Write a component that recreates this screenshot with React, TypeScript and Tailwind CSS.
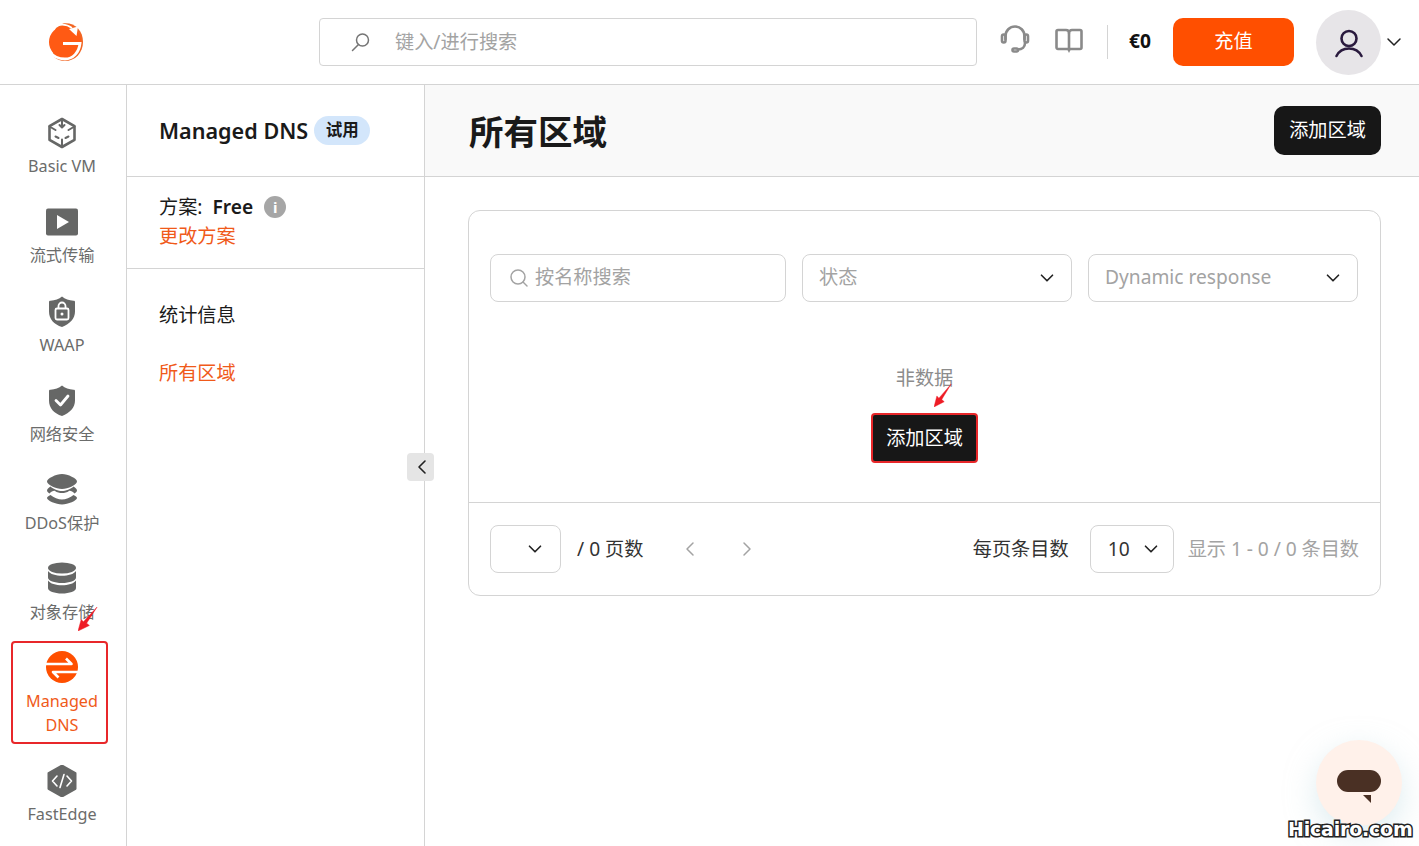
import React from "react";
import { ChevronDown, ChevronLeft, ChevronRight } from "lucide-react";

const C = "#666766";

const Cube = () => (
  <svg width="32" height="32" viewBox="0 0 32 32" fill="none" stroke={C} strokeWidth="2.6" strokeLinejoin="round" strokeLinecap="round">
    <path d="M16 2 28.500 9.200V22.800L16 30 3.500 22.800V9.200Z" />
    <path d="M16 3v7M13.500 8 16 10.500 18.500 8M3.500 9.500 9.500 13M28.500 9.500 22.500 13M16 29v-6.500M9.500 19.500 12.500 21M22.500 19.500 19.500 21" strokeWidth="2" />
  </svg>
);
const Play = () => (
  <svg width="32" height="32" viewBox="0 0 32 32">
    <rect x="0" y="2.500" width="32" height="27" rx="2" fill={C} />
    <path d="M11 9v14l12-7z" fill="#fff" />
  </svg>
);
const shield = "M16 1.500c3 2.600 7 4 11.500 4.200 1 0 1.500.5 1.500 1.300v9.500c0 7-5 12.500-13 15.500C8 29.500 3 24 3 16.500V7c0-.8.500-1.300 1.500-1.300C9 5.500 13 4.100 16 1.500Z";
const ShieldLock = () => (
  <svg width="32" height="32" viewBox="0 0 32 32">
    <path d={shield} fill={C} />
    <rect x="9.500" y="13.500" width="13" height="11" rx="1.500" fill="none" stroke="#fff" strokeWidth="1.800" />
    <path d="M12.500 13.500v-2.500a3.500 3.500 0 0 1 7 0v2.500" fill="none" stroke="#fff" strokeWidth="1.800" />
    <circle cx="16" cy="19" r="1.500" fill="#fff" />
  </svg>
);
const ShieldCheck = () => (
  <svg width="32" height="32" viewBox="0 0 32 32">
    <path d={shield} fill={C} />
    <path d="M10 16.500 14.500 21 22 12" fill="none" stroke="#fff" strokeWidth="2.800" strokeLinecap="round" strokeLinejoin="round" />
  </svg>
);
const Layers = () => (
  <svg width="32" height="32" viewBox="0 0 32 32" fill={C}>
    <path d="M16 1C22 1 31 5.500 31 8.500S22 16 16 16 1 11.500 1 8.500 10 1 16 1Z" />
    <path d="M4.500 13.500C2.500 15 1 16 1 17.500c0 1 1 2 2.500 3 2-2 4-3 5.500-2.500 2 1.500 4.500 2 7 2s5-.5 7-2c1.500-.5 3.500.5 5.500 2.500 1.500-1 2.500-2 2.500-3 0-1.500-1.500-2.500-3.500-4C25 16 19.500 18 16 18S7 16 4.500 13.500Z" />
    <path d="M4.500 22C2.500 23 1 24 1 25c0 2.500 9 6.500 15 6.500S31 27.500 31 25c0-1-1.500-2-3.500-3-3 2.500-8 4.500-11.500 4.500S7.500 24.500 4.500 22Z" />
  </svg>
);
const Db = () => (
  <svg width="32" height="32" viewBox="0 0 32 32" fill={C}>
    <ellipse cx="16" cy="6" rx="14" ry="5.500" />
    <path d="M2 9c2 3.200 8 4.800 14 4.800S28 12.200 30 9v6.500c0 3.200-6.500 5.500-14 5.500S2 18.700 2 15.500Z" />
    <path d="M2 18.500c2 3.200 8 4.800 14 4.800s12-1.600 14-4.800V26c0 3.200-6.500 5.500-14 5.500S2 29.200 2 26Z" />
  </svg>
);
const Swap = () => (
  <svg width="32" height="32" viewBox="0 0 32 32">
    <circle cx="16" cy="16" r="16" fill="#FF4F00" />
    <path d="M0 13h25.500L20 7.500" fill="none" stroke="#fff" strokeWidth="2.600" strokeLinejoin="round" />
    <path d="M32 21H7l5.500 5.500" fill="none" stroke="#fff" strokeWidth="2.600" strokeLinejoin="round" />
  </svg>
);
const Hex = () => (
  <svg width="32" height="32" viewBox="0 0 32 32">
    <path d="M16 0.500 29.500 8.200v15.600L16 31.500 2.500 23.800V8.200Z" fill={C} stroke={C} strokeWidth="2" strokeLinejoin="round" />
    <path d="M11 11 6.500 16 11 21M21 11l4.500 5-4.500 5M18 9.500 14 22.500" fill="none" stroke="#fff" strokeWidth="1.600" strokeLinecap="round" strokeLinejoin="round" />
  </svg>
);

const Logo = () => (
  <svg width="36" height="40" viewBox="0 0 36 40">
    <path d="M15 1.500C26 0 35 8 35 20c0 11-8 19-18 19-4 0-8-1.500-11-4L2 20 8 6Z" fill="#F26522" />
    <circle cx="17" cy="20" r="16" fill="#FF5A14" />
    <path d="M2 30C6 35.500 12 37 17 37c8 0 14-6.500 15-15.500H15" fill="none" stroke="#fff" strokeWidth="2.800" />
    <path d="M1 36C6 38.500 11 40 16 40H0Z" fill="#fff" />
    <path d="M21 7 30 4.500 28.500 14Z" fill="#fff" />
    <path d="M9 3.500C14 2 20 3 24 6" fill="none" stroke="#fff" strokeWidth="1.600" />
  </svg>
);

type ItemProps = { icon: React.ReactNode; label: string; low?: boolean };
const NavItem = ({ icon, label, low }: ItemProps) => (
  <div className="flex h-[89px] flex-col items-center pt-2">
    {icon}
    <div className={(low ? "mt-[6px]" : "mt-[5px]") + " text-center text-[16.2px] leading-6 text-[#6b6c6b]"}>{label}</div>
  </div>
);

const Arrow = ({ className }: { className: string }) => (
  <svg className={className} viewBox="0 0 22 26" preserveAspectRatio="none">
    <path d="M21 0 9.500 17.500l3 2.500L0 26l3.500-12.500 2.500 2.500Z" fill="#EE1C25" stroke="#EE1C25" strokeWidth="0.500" />
  </svg>
);

const fieldCls = "flex h-12 items-center rounded-lg border border-[#d4d4d4] bg-white";

export default function App() {
  return (
    <div
      className="relative h-[846px] w-[1419px] overflow-hidden bg-white text-[#1a1a1a]"
      style={{ fontFamily: '"Noto Sans", "Noto Sans CJK SC", sans-serif' }}
    >
      <header className="flex h-[85px] items-center border-b border-[#d4d4d4]">
        <div className="flex w-[319px] pl-[48px]">
          <Logo />
        </div>
        <div className="flex h-12 w-[658px] items-center rounded border border-[#d4d4d4] pl-[31px]">
          <svg width="20" height="20" viewBox="0 0 20 20" fill="none" stroke="#757575" strokeWidth="1.500" strokeLinecap="round">
            <circle cx="11.500" cy="8" r="6" />
            <path d="M7.500 12.500 1.500 18.500" />
          </svg>
          <span className="ml-[24px] text-[19.2px] text-[#a3a3a3]">键入/进行搜索</span>
        </div>
        <svg className="ml-[23px] mb-[6px]" width="30" height="30" viewBox="0 0 30 30" fill="none" stroke="#8a8a8a" strokeWidth="2.600" strokeLinecap="round">
          <path d="M5.500 15V12a9.500 9.500 0 0 1 19 0v3" />
          <rect x="2" y="10.500" width="3.500" height="8" rx="1.700" />
          <rect x="24.500" y="10.500" width="3.500" height="8" rx="1.700" />
          <path d="M25 19c0 4-3 6.500-7 6.500" />
          <rect x="12.500" y="24.500" width="5.500" height="3" rx="1.500" />
        </svg>
        <svg className="ml-[24px] mb-[2px]" width="30" height="30" viewBox="0 0 30 30" fill="none" stroke="#8a8a8a" strokeWidth="2.600" strokeLinejoin="round">
          <path d="M4 4h8c1.700 0 3 1.300 3 3 0-1.700 1.300-3 3-3h8c.8 0 1.500.7 1.500 1.500v16c0 .8-.7 1.500-1.500 1.500H4c-.8 0-1.500-.7-1.500-1.500v-16C2.500 4.700 3.200 4 4 4Z" />
          <path d="M15 7V24" />
          <path d="M13.500 24h3L15 27Z" fill="#8a8a8a" stroke="none" />
        </svg>
        <div className="ml-[23px] h-[34px] w-px bg-[#d4d4d4]" />
        <div className="ml-[21px] pb-[2px] text-[19.2px] font-bold text-[#111]">€0</div>
        <button className="ml-[22px] h-12 w-[121px] rounded-[10px] bg-[#ff4f00] pb-[2px] text-[19.2px] text-white">充值</button>
        <div className="ml-[22px] flex h-[65px] w-[65px] items-center justify-center rounded-full bg-[#e7e5e8]">
          <svg className="ml-[2px] mt-[2px]" width="32" height="32" viewBox="0 0 32 32" fill="none" stroke="#2a1a3e" strokeWidth="2.600" strokeLinecap="round">
            <circle cx="16" cy="11.500" r="7.500" />
            <path d="M3.500 29C6 24 10 21.500 16 21.500S26 24 28.500 29" />
          </svg>
        </div>
        <ChevronDown className="ml-[1px] text-[#222]" size={24} strokeWidth={1.500} />
      </header>

      <div className="flex h-[761px]">
        <nav className="relative w-[127px] shrink-0 border-r border-[#d4d4d4] pr-[2px] pt-6">
          <NavItem icon={<Cube />} label="Basic VM" />
          <NavItem icon={<Play />} label="流式传输" />
          <NavItem icon={<ShieldLock />} label="WAAP" low />
          <NavItem icon={<ShieldCheck />} label="网络安全" low />
          <NavItem icon={<Layers />} label="DDoS保护" low />
          <NavItem icon={<Db />} label="对象存储" low />
          <div className="flex h-[114px] flex-col items-center pt-2">
            <Swap />
            <div className="mt-[6px] text-center text-[16.2px] leading-6 text-[#f05a1a]">
              Managed
              <br />
              DNS
            </div>
          </div>
          <NavItem icon={<Hex />} label="FastEdge" />
          <div className="absolute left-[11px] top-[556px] h-[103px] w-[97px] rounded-sm border-2 border-[#e8272a]" />
          <Arrow className="absolute left-[78px] top-[522px] h-[24px] w-[20px]" />
        </nav>

        <aside className="relative w-[298px] shrink-0 border-r border-[#d4d4d4]">
          <div className="flex h-[92px] items-center border-b border-[#d4d4d4] pl-8">
            <span className="pt-[2px] text-[21.6px] font-semibold text-[#1a1a1a]">Managed DNS</span>
            <span className="ml-[6px] flex h-[29px] w-14 items-center justify-center rounded-full bg-[#d3e6fb] text-[16.5px] font-bold">试用</span>
          </div>
          <div className="h-[92px] border-b border-[#d4d4d4] pl-8 pt-4">
            <div className="flex h-[28px] items-center text-[19.2px]">
              <span>方案:</span>
              <span className="ml-[10px] font-semibold">Free</span>
              <span className="ml-[11px] flex h-[22px] w-[22px] items-center justify-center rounded-full bg-[#a6a6a6] text-[15px] font-bold leading-none text-white">i</span>
            </div>
            <div className="h-[28px] pt-px text-[19.2px] leading-7 text-[#f05a1a]">更改方案</div>
          </div>
          <div className="pl-8 pt-[32px] text-[19.2px]">
            <div className="leading-7">统计信息</div>
            <div className="mt-[30px] leading-7 text-[#f05a1a]">所有区域</div>
          </div>
          <div className="absolute right-[-10px] top-[368px] flex h-7 w-[27px] items-center justify-center rounded bg-[#e5e5e5]">
            <ChevronLeft size={24} strokeWidth={1.600} className="ml-[2px] text-[#222]" />
          </div>
        </aside>

        <main className="flex-1">
          <div className="flex h-[92px] items-center justify-between border-b border-[#d4d4d4] bg-[#f9f9f9] pl-[44px] pr-[38px]">
            <h1 className="pt-[3px] text-[34.5px] font-bold leading-none text-[#1a1a1a]">所有区域</h1>
            <button className="h-[49px] w-[107px] rounded-[10px] bg-[#171717] text-[19.2px] text-white">添加区域</button>
          </div>

          <div className="ml-[43px] mt-[33px] h-[386px] w-[913px] rounded-xl border border-[#d4d4d4]">
            <div className="flex gap-4 px-[21px] pt-[43px]">
              <div className={fieldCls + " w-[296px] pb-px pl-[18px]"}>
                <svg width="20" height="20" viewBox="0 0 20 20" fill="none" stroke="#a3a3a3" strokeWidth="1.500" strokeLinecap="round">
                  <circle cx="9" cy="9" r="7" />
                  <path d="M14 14l4 4" />
                </svg>
                <span className="ml-[6px] text-[19.2px] text-[#a3a3a3]">按名称搜索</span>
              </div>
              <div className={fieldCls + " w-[270px] justify-between pb-px pl-4 pr-[13px]"}>
                <span className="text-[19.2px] text-[#a3a3a3]">状态</span>
                <ChevronDown size={22} strokeWidth={1.800} className="text-[#222]" />
              </div>
              <div className={fieldCls + " w-[270px] justify-between pb-px pl-4 pr-[13px]"}>
                <span className="text-[19.2px] text-[#a3a3a3]">Dynamic response</span>
                <ChevronDown size={22} strokeWidth={1.800} className="text-[#222]" />
              </div>
            </div>

            <div className="relative flex h-[200px] flex-col items-center pt-[62px]">
              <div className="h-[28px] text-[19.2px] leading-7 text-[#8c8c8c]">非数据</div>
              <button className="mt-[21px] h-[50px] w-[107px] rounded-sm border-2 border-[#e8272a] bg-[#171717] text-[19.2px] text-white">添加区域</button>
              <Arrow className="absolute left-[465px] top-[82px] h-[23px] w-[18px]" />
            </div>

            <div className="flex h-[93px] items-center border-t border-[#d4d4d4] pl-[21px] pr-[21px]">
              <div className={fieldCls + " w-[71px] justify-end pr-[14px]"}>
                <ChevronDown size={22} strokeWidth={1.800} className="text-[#222]" />
              </div>
              <span className="ml-4 text-[19.2px] text-[#333]">/ 0 页数</span>
              <ChevronLeft className="ml-[35px] text-[#a3a3a3]" size={24} strokeWidth={1.500} />
              <ChevronRight className="ml-[33px] text-[#a3a3a3]" size={24} strokeWidth={1.500} />
              <span className="ml-auto text-[19.2px] text-[#333]">每页条目数</span>
              <div className={fieldCls + " ml-[21px] w-[84px] justify-between pl-[17px] pr-[11px]"}>
                <span className="text-[19.2px] text-[#333]">10</span>
                <ChevronDown size={22} strokeWidth={1.800} className="text-[#222]" />
              </div>
              <span className="ml-[14px] text-[19.2px] tracking-[-0.05px] text-[#a3a3a3]">显示 1 - 0 / 0 条目数</span>
            </div>
          </div>
        </main>
      </div>

      <div className="absolute left-[1316px] top-[740px] flex h-[86px] w-[86px] items-center justify-center rounded-full bg-[#fff1ea] shadow-[0_10px_30px_rgba(190,220,225,0.5)]">
        <div className="relative mb-1 h-[22px] w-[44px] rounded-full bg-[#4a3024]">
          <svg className="absolute left-[26px] top-[25px]" width="9" height="9" viewBox="0 0 9 9">
            <path d="M0 0h8v8Z" fill="#4a3024" />
          </svg>
        </div>
      </div>
      <div className="absolute left-[1288px] top-[815px] text-[19px] font-bold leading-7 tracking-[-0.2px] text-white [-webkit-text-stroke:3px_#222] [font-family:'DejaVu_Sans'] [paint-order:stroke_fill]">
        Hicairo.com
      </div>
    </div>
  );
}
